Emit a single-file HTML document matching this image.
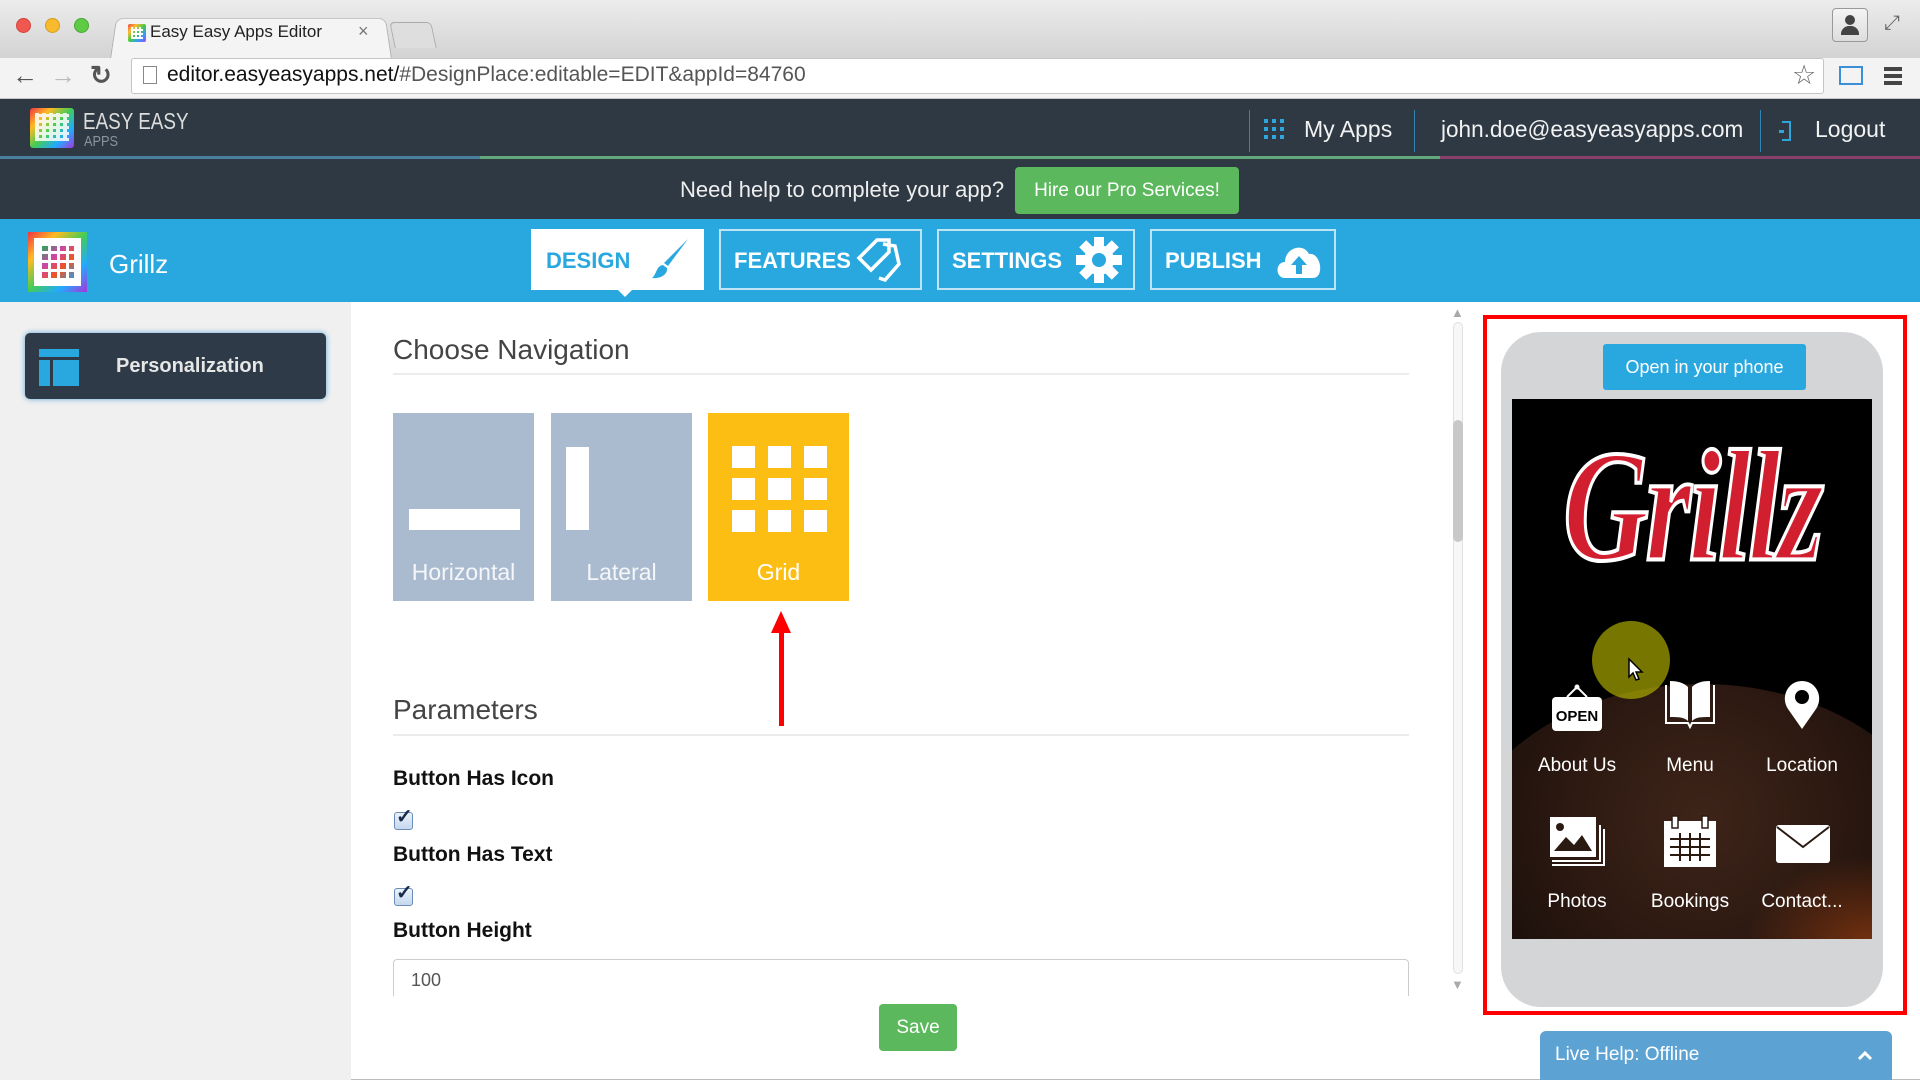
<!DOCTYPE html>
<html><head><meta charset="utf-8">
<style>
*{margin:0;padding:0;box-sizing:border-box}
body{width:1920px;height:1080px;position:relative;overflow:hidden;font-family:"Liberation Sans",sans-serif;background:#fff}
.a{position:absolute}
.t{white-space:nowrap}
</style></head><body>

<!-- chrome tab strip -->
<div class="a" style="left:0;top:0;width:1920px;height:58px;background:linear-gradient(#ececec,#d3d3d3)"></div>
<div class="a" style="left:16px;top:18px;width:15px;height:15px;border-radius:50%;background:#f0584f;border:1px solid #d0443c"></div>
<div class="a" style="left:45px;top:18px;width:15px;height:15px;border-radius:50%;background:#f7bb2d;border:1px solid #d69c20"></div>
<div class="a" style="left:74px;top:18px;width:15px;height:15px;border-radius:50%;background:#5fcb45;border:1px solid #48a834"></div>
<div class="a" style="left:110px;top:15px;width:282px;height:44px;background:#f4f4f4;border:1px solid #b5b5b5;border-bottom:none;border-radius:8px 8px 0 0;transform:perspective(200px) rotateX(12deg);transform-origin:bottom"></div>
<div class="a" style="left:128px;top:24px;width:18px;height:18px;background:linear-gradient(135deg,#e44,#fb3,#4c4,#39f,#a4e);border-radius:2px"></div>
<div class="a" style="left:131px;top:27px;width:12px;height:12px;background:repeating-linear-gradient(90deg,#fff 0 2px,transparent 2px 4px),repeating-linear-gradient(0deg,#fff 0 2px,transparent 2px 4px)"></div>
<div class="a t" style="left:150px;top:22px;font-size:17px;color:#222">Easy Easy Apps Editor</div>
<div class="a t" style="left:358px;top:21px;font-size:18px;color:#777">×</div>
<div class="a" style="left:392px;top:22px;width:42px;height:26px;border:1px solid #aaa;border-bottom:none;border-radius:5px 5px 0 0;background:#dedede;transform:skewX(12deg)"></div>
<div class="a" style="left:1832px;top:8px;width:36px;height:34px;border:1px solid #999;border-radius:4px;background:linear-gradient(#f4f4f4,#ddd)"></div>
<div class="a" style="left:1845px;top:15px;width:10px;height:10px;border-radius:50%;background:#444"></div>
<div class="a" style="left:1841px;top:26px;width:18px;height:9px;border-radius:8px 8px 0 0;background:#444"></div>
<div class="a t" style="left:1884px;top:12px;font-size:20px;color:#666">⤢</div>

<!-- toolbar -->
<div class="a" style="left:0;top:58px;width:1920px;height:41px;background:#f3f3f3;border-bottom:1px solid #c8c8c8"></div>
<div class="a t" style="left:12px;top:60px;font-size:26px;color:#555;font-weight:bold">←</div>
<div class="a t" style="left:50px;top:60px;font-size:26px;color:#bbb;font-weight:bold">→</div>
<div class="a t" style="left:90px;top:60px;font-size:26px;color:#555;font-weight:bold">↻</div>
<div class="a" style="left:131px;top:58px;width:1693px;height:36px;background:#fff;border:1px solid #c5c5c5;border-radius:3px"></div>
<div class="a" style="left:143px;top:66px;width:14px;height:18px;border:1px solid #888;background:#fff"></div>
<div class="a t" style="left:167px;top:63px;font-size:21px;color:#111">editor.easyeasyapps.net/<span style="color:#555">#DesignPlace:editable=EDIT&amp;appId=84760</span></div>
<div class="a t" style="left:1792px;top:60px;font-size:27px;color:#666">☆</div>
<div class="a" style="left:1839px;top:66px;width:24px;height:19px;border:2px solid #3a8fd6"></div>
<div class="a" style="left:1884px;top:67px;width:18px;height:4px;background:#444;box-shadow:0 7px 0 #444,0 14px 0 #444"></div>

<!-- dark header -->
<div class="a" style="left:0;top:99px;width:1920px;height:120px;background:#2e3944"></div>
<div class="a" style="left:0;top:156px;width:480px;height:3px;background:#4a7fa2"></div>
<div class="a" style="left:480px;top:156px;width:960px;height:3px;background:#63a87a"></div>
<div class="a" style="left:1440px;top:156px;width:480px;height:3px;background:#8a3f6a"></div>
<div class="a" style="left:30px;top:108px;width:44px;height:40px;border-radius:3px;background:linear-gradient(135deg,#e34,#fb2,#4c5,#2af,#a3d)"></div>
<div class="a" style="left:35px;top:113px;width:34px;height:28px;background:repeating-linear-gradient(90deg,#fff 0 4px,transparent 4px 7px),repeating-linear-gradient(0deg,#fff 0 3px,transparent 3px 6px);opacity:.85"></div>
<div class="a t" style="left:83px;top:108px;font-size:23px;color:#ddd;transform:scaleX(.82);transform-origin:left">EASY EASY</div>
<div class="a t" style="left:84px;top:133px;font-size:15px;color:#8a949d;transform:scaleX(.85);transform-origin:left">APPS</div>

<div class="a" style="left:1249px;top:110px;width:1px;height:42px;background:#2d86b5"></div>
<div class="a" style="left:1264px;top:119px;width:20px;height:20px;background:repeating-linear-gradient(90deg,#2ea6dc 0 4px,transparent 4px 8px)"></div>
<div class="a" style="left:1264px;top:119px;width:20px;height:20px;background:repeating-linear-gradient(0deg,transparent 0 4px,#2e3944 4px 8px)"></div>
<div class="a t" style="left:1304px;top:116px;font-size:23px;color:#f2f2f2">My Apps</div>
<div class="a" style="left:1414px;top:110px;width:1px;height:42px;background:#2d86b5"></div>
<div class="a t" style="left:1441px;top:116px;font-size:23px;color:#f2f2f2;transform:scaleX(.98);transform-origin:left">john.doe@easyeasyapps.com</div>
<div class="a" style="left:1760px;top:110px;width:1px;height:42px;background:#2d86b5"></div>
<div class="a" style="left:1782px;top:121px;width:9px;height:20px;border:2px solid #2ea6dc;border-left:none"></div>
<div class="a" style="left:1779px;top:130px;width:5px;height:3px;background:#2ea6dc"></div>
<div class="a t" style="left:1815px;top:116px;font-size:23px;color:#f2f2f2">Logout</div>

<div class="a t" style="left:680px;top:177px;font-size:22px;color:#eee">Need help to complete your app?</div>
<div class="a t" style="left:1015px;top:167px;width:224px;height:47px;background:#5cb85c;border-radius:4px;color:#fff;font-size:19px;line-height:47px;text-align:center">Hire our Pro Services!</div>

<!-- blue bar -->
<div class="a" style="left:0;top:219px;width:1920px;height:83px;background:#29a8e0"></div>
<div class="a" style="left:28px;top:232px;width:59px;height:60px;background:linear-gradient(135deg,#e34,#fb2,#4c5,#2af,#a3d)"></div>
<div class="a" style="left:34px;top:238px;width:47px;height:48px;background:#fff"></div>
<div class="a" style="left:42px;top:246px;width:32px;height:32px;background:repeating-linear-gradient(90deg,transparent 0 6px,#fff 6px 9px),repeating-linear-gradient(0deg,transparent 0 6px,#fff 6px 9px),linear-gradient(135deg,#2a5,#c4a,#e52,#39d)"></div>
<div class="a t" style="left:109px;top:249px;font-size:26px;color:#fff">Grillz</div>

<div class="a" style="left:531px;top:229px;width:173px;height:61px;background:#fff"></div>
<div class="a" style="left:617px;top:289px;width:0;height:0;border-left:8px solid transparent;border-right:8px solid transparent;border-top:8px solid #fff"></div>
<div class="a t" style="left:546px;top:248px;font-size:22px;font-weight:bold;color:#29a8e0">DESIGN</div>
<svg class="a" style="left:648px;top:236px" width="44" height="46" viewBox="0 0 44 46"><path d="M40 3 L20 30 L16 27 Z" fill="#29a8e0"/><path d="M15 29 C8 30 9 38 4 42 C13 43 20 38 19 32 Z" fill="#29a8e0"/></svg>

<div class="a" style="left:719px;top:229px;width:203px;height:61px;border:2px solid #bfe4f6"></div>
<div class="a t" style="left:734px;top:248px;font-size:22px;font-weight:bold;color:#fff">FEATURES</div>
<svg class="a" style="left:855px;top:234px" width="52" height="52" viewBox="0 0 52 52" fill="none" stroke="#fff" stroke-width="3.5"><path d="M4 24 L22 6 L34 6 L34 18 L16 36 Z"/><path d="M28 10 L40 12 L44 30 L30 46 L24 44"/></svg>

<div class="a" style="left:937px;top:229px;width:198px;height:61px;border:2px solid #bfe4f6"></div>
<div class="a t" style="left:952px;top:248px;font-size:22px;font-weight:bold;color:#fff">SETTINGS</div>
<svg class="a" style="left:1075px;top:236px" width="48" height="48" viewBox="0 0 48 48"><g fill="#fff"><circle cx="24" cy="24" r="15"/><rect x="19" y="1" width="10" height="46"/><rect x="1" y="19" width="46" height="10"/><rect x="19" y="1" width="10" height="46" transform="rotate(45 24 24)"/><rect x="19" y="1" width="10" height="46" transform="rotate(-45 24 24)"/></g><circle cx="24" cy="24" r="7" fill="#29a8e0"/></svg>

<div class="a" style="left:1150px;top:229px;width:186px;height:61px;border:2px solid #bfe4f6"></div>
<div class="a t" style="left:1165px;top:248px;font-size:22px;font-weight:bold;color:#fff">PUBLISH</div>
<svg class="a" style="left:1273px;top:238px" width="52" height="44" viewBox="0 0 52 44"><path d="M12 40 C2 40 2 24 12 24 C12 10 30 4 36 16 C48 14 52 40 40 40 Z" fill="#fff"/><path d="M26 18 L18 27 L23 27 L23 36 L29 36 L29 27 L34 27 Z" fill="#29a8e0"/></svg>

<!-- sidebar -->
<div class="a" style="left:0;top:302px;width:351px;height:778px;background:#f0f0f0"></div>
<div class="a" style="left:25px;top:333px;width:301px;height:66px;background:#2e3a47;border-radius:5px;box-shadow:0 0 6px #5aa7d8"></div>
<div class="a" style="left:39px;top:349px;width:40px;height:8px;background:#29a8e0"></div>
<div class="a" style="left:39px;top:360px;width:11px;height:26px;background:#29a8e0"></div>
<div class="a" style="left:53px;top:360px;width:26px;height:26px;background:#29a8e0"></div>
<div class="a t" style="left:116px;top:355px;font-size:20px;font-weight:bold;color:#e6e6e6">Personalization</div>

<!-- main -->
<div class="a t" style="left:393px;top:334px;font-size:28px;color:#444">Choose Navigation</div>
<div class="a" style="left:393px;top:373px;width:1016px;height:2px;background:#ececec"></div>

<div class="a" style="left:393px;top:413px;width:141px;height:188px;background:#abbbcf"></div>
<div class="a" style="left:409px;top:509px;width:111px;height:21px;background:#fff"></div>
<div class="a t" style="left:393px;top:559px;width:141px;text-align:center;font-size:23px;color:#f4f6f9">Horizontal</div>

<div class="a" style="left:551px;top:413px;width:141px;height:188px;background:#abbbcf"></div>
<div class="a" style="left:566px;top:447px;width:23px;height:83px;background:#fff"></div>
<div class="a t" style="left:551px;top:559px;width:141px;text-align:center;font-size:23px;color:#f4f6f9">Lateral</div>

<div class="a" style="left:708px;top:413px;width:141px;height:188px;background:#fdbe14"></div>
<div class="a" style="left:732px;top:446px;width:95px;height:86px;background:
linear-gradient(90deg,transparent 23px,#fdbe14 23px 36px,transparent 36px 59px,#fdbe14 59px 72px,transparent 72px),
linear-gradient(0deg,transparent 22px,#fdbe14 22px 32px,transparent 32px 54px,#fdbe14 54px 64px,transparent 64px),#fff"></div>
<div class="a t" style="left:708px;top:559px;width:141px;text-align:center;font-size:23px;color:#fff">Grid</div>

<div class="a" style="left:779px;top:630px;width:5px;height:96px;background:#f00"></div>
<div class="a" style="left:771px;top:611px;width:0;height:0;border-left:10px solid transparent;border-right:10px solid transparent;border-bottom:22px solid #f00"></div>

<div class="a t" style="left:393px;top:694px;font-size:28px;color:#444">Parameters</div>
<div class="a" style="left:393px;top:734px;width:1016px;height:2px;background:#ececec"></div>

<div class="a t" style="left:393px;top:767px;font-size:21px;font-weight:bold;color:#111">Button Has Icon</div>
<div class="a" style="left:394px;top:812px;width:19px;height:18px;border:1px solid #6b8db5;border-radius:3px;background:linear-gradient(#eaf2fb,#c5d8ee)"></div>
<div class="a t" style="left:396px;top:804px;font-size:20px;color:#1a2b4a;font-weight:bold">✓</div>
<div class="a t" style="left:393px;top:843px;font-size:21px;font-weight:bold;color:#111">Button Has Text</div>
<div class="a" style="left:394px;top:888px;width:19px;height:18px;border:1px solid #6b8db5;border-radius:3px;background:linear-gradient(#eaf2fb,#c5d8ee)"></div>
<div class="a t" style="left:396px;top:880px;font-size:20px;color:#1a2b4a;font-weight:bold">✓</div>
<div class="a t" style="left:393px;top:919px;font-size:21px;font-weight:bold;color:#111">Button Height</div>
<div class="a" style="left:393px;top:959px;width:1016px;height:50px;border:1px solid #ccc;border-radius:4px"></div>
<div class="a" style="left:390px;top:996px;width:1024px;height:20px;background:#fff"></div>
<div class="a t" style="left:411px;top:970px;font-size:18px;color:#555">100</div>

<div class="a t" style="left:879px;top:1004px;width:78px;height:47px;background:#5cb85c;border-radius:4px;color:#fff;font-size:19px;line-height:47px;text-align:center">Save</div>
<div class="a" style="left:351px;top:1079px;width:1569px;height:1px;background:#bbb"></div>

<!-- scrollbar -->
<div class="a t" style="left:1451px;top:305px;font-size:13px;color:#aaa">▲</div>
<div class="a" style="left:1453px;top:322px;width:10px;height:652px;border:1px solid #e0e0e0;border-radius:5px;background:#f7f7f7"></div>
<div class="a" style="left:1453px;top:420px;width:10px;height:122px;border-radius:5px;background:#c8c8c8"></div>
<div class="a t" style="left:1451px;top:977px;font-size:13px;color:#aaa">▼</div>

<!-- preview -->
<div class="a" style="left:1483px;top:315px;width:424px;height:700px;border:4px solid #f00"></div>
<div class="a" style="left:1501px;top:332px;width:382px;height:675px;background:#d4d5d7;border-radius:40px"></div>
<div class="a t" style="left:1603px;top:344px;width:203px;height:46px;background:#29a8e0;border-radius:3px;color:#fff;font-size:18px;line-height:46px;text-align:center">Open in your phone</div>
<div class="a" style="left:1512px;top:399px;width:360px;height:540px;background:#000;overflow:hidden">
  <div class="a" style="left:-60px;top:285px;width:500px;height:380px;border-radius:50%;background:radial-gradient(ellipse at 50% 35%,#3e2419 0%,#2e1a12 35%,#1c100b 65%,#0a0504 85%)"></div>
  <div class="a" style="left:210px;top:440px;width:200px;height:130px;background:radial-gradient(ellipse at 75% 85%,#7a3310,transparent 60%)"></div>
  <div class="a t" style="left:0;top:16px;width:360px;text-align:center;font-family:'Liberation Serif',serif;font-style:italic;font-weight:bold;font-size:118px;color:#d21f30;-webkit-text-stroke:3px #fff;letter-spacing:-3px;transform:scaleY(1.35);transform-origin:top">Grillz</div>
  <div class="a" style="left:80px;top:222px;width:78px;height:78px;border-radius:50%;background:rgba(190,190,0,.62)"></div>
  <svg class="a" style="left:115px;top:258px" width="18" height="26" viewBox="0 0 18 26"><path d="M2 2 L2 20 L6 16 L9 23 L12 22 L9 15 L15 15 Z" fill="#fff" stroke="#000" stroke-width="1.5"/></svg>
  <svg class="a" style="left:37px;top:284px" width="56" height="52" viewBox="0 0 56 52"><path d="M18 14 L28 4 L38 14" fill="none" stroke="#fff" stroke-width="2"/><circle cx="28" cy="4" r="2.5" fill="#fff"/><rect x="3" y="14" width="50" height="34" rx="4" fill="#fff"/><text x="28" y="38" text-anchor="middle" font-family="Liberation Sans" font-weight="bold" font-size="15" fill="#000">OPEN</text></svg>
  <div class="a t" style="left:5px;top:356px;width:120px;text-align:center;font-size:19px;color:#fff">About Us</div>
  <svg class="a" style="left:150px;top:280px" width="56" height="54" viewBox="0 0 56 54"><path d="M4 6 L4 44 L26 44 L28 48 L30 44 L52 44 L52 6" fill="none" stroke="#fff" stroke-width="2"/><path d="M8 2 C16 2 22 4 26 8 L26 42 C22 38 16 38 8 38 Z M48 2 C40 2 34 4 30 8 L30 42 C34 38 40 38 48 38 Z" fill="#fff"/></svg>
  <div class="a t" style="left:118px;top:356px;width:120px;text-align:center;font-size:19px;color:#fff">Menu</div>
  <svg class="a" style="left:270px;top:280px" width="40" height="52" viewBox="0 0 40 52"><path d="M20 50 L6 30 C-2 18 6 2 20 2 C34 2 42 18 34 30 Z" fill="#fff"/><circle cx="20" cy="18" r="7" fill="#000"/></svg>
  <div class="a t" style="left:230px;top:356px;width:120px;text-align:center;font-size:19px;color:#fff">Location</div>
  <svg class="a" style="left:36px;top:416px" width="60" height="56" viewBox="0 0 60 56"><path d="M4 46 L52 46 L52 10 M4 50 L56 50 L56 14" fill="none" stroke="#fff" stroke-width="2"/><rect x="2" y="2" width="46" height="40" fill="#fff"/><circle cx="12" cy="12" r="4" fill="#2a1a12"/><path d="M6 36 L18 22 L26 30 L34 20 L44 36 Z" fill="#2a1a12"/></svg>
  <div class="a t" style="left:5px;top:492px;width:120px;text-align:center;font-size:19px;color:#fff">Photos</div>
  <svg class="a" style="left:150px;top:416px" width="56" height="56" viewBox="0 0 56 56"><rect x="2" y="6" width="52" height="46" fill="#fff"/><rect x="10" y="1" width="6" height="12" fill="#fff" stroke="#2a1a12" stroke-width="1.5"/><rect x="40" y="1" width="6" height="12" fill="#fff" stroke="#2a1a12" stroke-width="1.5"/><path d="M8 24 H48 M8 32 H48 M8 40 H48 M18 18 V46 M28 18 V46 M38 18 V46" stroke="#2a1a12" stroke-width="2"/></svg>
  <div class="a t" style="left:118px;top:492px;width:120px;text-align:center;font-size:19px;color:#fff">Bookings</div>
  <svg class="a" style="left:262px;top:424px" width="58" height="42" viewBox="0 0 58 42"><rect x="2" y="2" width="54" height="38" rx="3" fill="#fff"/><path d="M3 4 L29 24 L55 4" fill="none" stroke="#2a1a12" stroke-width="2"/></svg>
  <div class="a t" style="left:230px;top:492px;width:120px;text-align:center;font-size:19px;color:#fff">Contact...</div>
</div>

<!-- live help -->
<div class="a" style="left:1540px;top:1031px;width:352px;height:49px;background:#5ca3d4;border-radius:6px 6px 0 0"></div>
<div class="a t" style="left:1555px;top:1044px;font-size:19px;color:#fff">Live Help: Offline</div>
<svg class="a" style="left:1857px;top:1050px" width="16" height="12" viewBox="0 0 16 12"><path d="M2 9 L8 3 L14 9" fill="none" stroke="#fff" stroke-width="3"/></svg>
</body></html>
